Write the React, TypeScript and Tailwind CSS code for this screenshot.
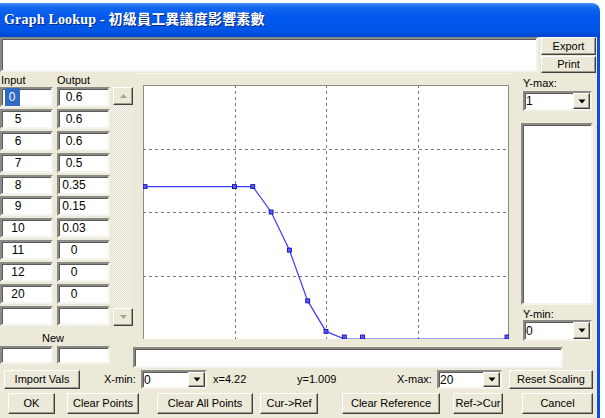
import React from "react";

const rows: [string, string][] = [
  ["0", "0.6"],
  ["5", "0.6"],
  ["6", "0.6"],
  ["7", "0.5"],
  ["8", "0.35"],
  ["9", "0.15"],
  ["10", "0.03"],
  ["11", "0"],
  ["12", "0"],
  ["20", "0"],
  ["", ""],
];

const sunken =
  "bg-white border-2 border-t-[#8a8a86] border-l-[#8a8a86] border-b-[#f4f3ee] border-r-[#f4f3ee] shadow-[inset_1px_1px_0_#5a5a58]";

function Btn({ label, className }: { label: string; className: string }) {
  return (
    <div
      className={
        "flex items-center justify-center bg-[#ece9d8] border border-t-white border-l-white border-r-[#404040] border-b-[#404040] shadow-[inset_-1px_-1px_0_#9d9a8e] text-[11px] text-black leading-none " +
        className
      }
    >
      {label}
    </div>
  );
}

function Select({ value, className }: { value: string; className: string }) {
  return (
    <div className={"flex items-stretch " + sunken + " " + className}>
      <div className="flex-1 flex items-center pl-[1px] text-[12px] leading-none">{value}</div>
      <div className="w-[17px] flex items-center justify-center bg-[#ece9d8] border border-t-white border-l-white border-r-[#404040] border-b-[#404040] shadow-[inset_-1px_-1px_0_#9d9a8e]">
        <svg width="8" height="5" viewBox="0 0 8 5">
          <path d="M0.5 0.5 L7.5 0.5 L4 4.5 Z" fill="#000" />
        </svg>
      </div>
    </div>
  );
}

function Cell({ v, selected, w }: { v: string; selected?: boolean; w: string }) {
  return (
    <div className={"h-[20px] w-[53px] flex items-center " + sunken}>
      <div className={w + " text-center text-[12px] leading-none"}>
        {selected ? (
          <span className="inline-block bg-[#316ac5] text-white w-[15px] py-[3px] -ml-[12px]">{v}</span>
        ) : (
          v
        )}
      </div>
    </div>
  );
}

function Chart() {
  const W = 366;
  const H = 254;
  const pts: [number, number][] = [
    [0, 0.6],
    [5, 0.6],
    [6, 0.6],
    [7, 0.5],
    [8, 0.35],
    [9, 0.15],
    [10, 0.03],
    [11, 0],
    [12, 0],
    [20, 0],
  ];
  const px = (x: number) => (x / 20) * W;
  const py = (y: number) => H - y * H;
  const d = pts.map((p, i) => (i === 0 ? "M" : "L") + px(p[0]).toFixed(1) + " " + py(p[1]).toFixed(1)).join(" ");
  return (
    <svg width={W} height={H} viewBox={`0 0 ${W} ${H}`} className="block">
      <rect x="0" y="0" width={W} height={H} fill="#fff" />
      <line x1="0.5" y1="0" x2="0.5" y2={H} stroke="#8a8a86" />
      <line x1="0" y1="0.5" x2={W} y2="0.5" stroke="#8a8a86" />
      <line x1={W - 0.5} y1="0" x2={W - 0.5} y2={H} stroke="#8a8a86" />
      {[0.25, 0.5, 0.75].map((f) => (
        <line key={"v" + f} x1={Math.round(W * f) + 0.5} y1="0" x2={Math.round(W * f) + 0.5} y2={H} stroke="#7a7a7a" strokeDasharray="3 3" />
      ))}
      {[0.25, 0.5, 0.75].map((f) => (
        <line key={"h" + f} x1="0" y1={Math.round(H * f) + 0.5} x2={W} y2={Math.round(H * f) + 0.5} stroke="#7a7a7a" strokeDasharray="3 3" />
      ))}
      <path d={d} fill="none" stroke="#3a3aff" strokeWidth="1.2" />
      {pts.map((p, i) => (
        <rect
          key={i}
          x={Math.min(Math.max(px(p[0]) - 2, 0), W - 4)}
          y={Math.min(py(p[1]) - 2, H - 4)}
          width="4"
          height="4"
          fill="#5a5aff"
          stroke="#0000b0"
          strokeWidth="0.8"
        />
      ))}
    </svg>
  );
}

export default function App() {
  return (
    <div className="w-[605px] h-[418px] bg-white overflow-hidden font-['Liberation_Sans',Arial,sans-serif] text-black">
      <div className="mt-[3px] w-[600px]">
        {/* Title bar */}
        <div className="h-[34px] rounded-tr-[8px] bg-[linear-gradient(180deg,#4a93f8_0%,#1468ee_12%,#0058ee_40%,#0056e6_80%,#0046d0_100%)] flex items-center pl-[4px]">
          <span className="text-white font-bold text-[14px] leading-none tracking-[0.2px] font-['Liberation_Serif','Noto_Sans_CJK_TC',serif] [text-shadow:1px_1px_0_#0a2a80]">
            Graph Lookup - 初級員工異議度影響素數
          </span>
        </div>
        {/* Body */}
        <div className="bg-[#ece9d8] border-r-[3px] border-r-[#0a4fd8] h-[381px]">
          {/* Top row */}
          <div className="h-[36px] flex">
            <div className={"w-[538px] h-[35px] " + sunken}></div>
            <div className="ml-[3px] flex flex-col">
              <Btn label="Export" className="w-[55px] h-[18px]" />
              <Btn label="Print" className="w-[55px] h-[17px] mt-[1px]" />
            </div>
          </div>
          {/* Middle */}
          <div className="h-[295px] flex">
            {/* Table */}
            <div className="w-[113px] flex flex-col">
              <div className="h-[14px] flex text-[11px] leading-[14px]">
                <span className="w-[57px] pl-[1px]">Input</span>
                <span>Output</span>
              </div>
              <div className="flex flex-col gap-[1.9px]">
                {rows.map((r, i) => (
                  <div key={i} className="flex gap-[4px]">
                    <Cell v={r[0]} selected={i === 0} w="w-[32px]" />
                    <Cell v={r[1]} w="w-[30px]" />
                  </div>
                ))}
              </div>
              <div className="h-[20px] w-[106px] text-center text-[11px] leading-[12px] pt-[6px]">New</div>
              <div className="flex gap-[4px]">
                <div className={"h-[18px] w-[53px] " + sunken}></div>
                <div className={"h-[18px] w-[53px] " + sunken}></div>
              </div>
            </div>
            {/* Scrollbar */}
            <div className="w-[20px] mt-[14px] h-[239px] flex flex-col bg-[repeating-conic-gradient(#f6f5f0_0_25%,#e3e0d2_0_50%)] bg-[length:2px_2px]">
              <div className="h-[18px] flex items-center justify-center bg-[#ece9d8] border border-t-white border-l-white border-r-[#404040] border-b-[#404040] shadow-[inset_-1px_-1px_0_#9d9a8e]">
                <svg width="7" height="4" viewBox="0 0 7 4">
                  <path d="M0 4 L7 4 L3.5 0 Z" fill="#a5a396" />
                </svg>
              </div>
              <div className="flex-1"></div>
              <div className="h-[18px] flex items-center justify-center bg-[#ece9d8] border border-t-white border-l-white border-r-[#404040] border-b-[#404040] shadow-[inset_-1px_-1px_0_#9d9a8e]">
                <svg width="7" height="4" viewBox="0 0 7 4">
                  <path d="M0 0 L7 0 L3.5 4 Z" fill="#a5a396" />
                </svg>
              </div>
            </div>
            {/* Right part */}
            <div className="flex-1 flex flex-col">
              <div className="h-[274px] flex">
                <div className="w-[382px] pl-[10px] pt-[11px] border-t border-t-[#f6f5ef]">
                  <Chart />
                </div>
                <div className="w-[82px] pl-[8px] flex flex-col">
                  <div className="mt-[4px] text-[11px] leading-[12px]">Y-max:</div>
                  <Select value="1" className="mt-[2px] h-[20px] w-[69px]" />
                  <div className={"mt-[12px] ml-[-2px] h-[182px] w-[72px] " + sunken}></div>
                  <div className="mt-[3px] text-[11px] leading-[12px]">Y-min:</div>
                  <Select value="0" className="h-[21px] w-[69px]" />
                </div>
              </div>
              <div className={"h-[21px] w-[430px] " + sunken}></div>
            </div>
          </div>
          {/* Row C */}
          <div className="h-[23px] flex items-center text-[11px]">
            <Btn label="Import Vals" className="ml-[4px] w-[76px] h-[19px]" />
            <span className="ml-[24px] w-[37px]">X-min:</span>
            <Select value="0" className="w-[66px] h-[19px]" />
            <span className="ml-[6px] w-[84px]">x=4.22</span>
            <span className="w-[100px]">y=1.009</span>
            <span className="w-[40px]">X-max:</span>
            <Select value="20" className="w-[65px] h-[19px]" />
            <Btn label="Reset Scaling" className="ml-[7px] w-[84px] h-[19px]" />
          </div>
          {/* Row D */}
          <div className="h-[24px] flex items-center">
            <Btn label="OK" className="ml-[8px] w-[47px] h-[21px]" />
            <Btn label="Clear Points" className="ml-[12px] w-[72px] h-[21px]" />
            <Btn label="Clear All Points" className="ml-[18px] w-[96px] h-[21px]" />
            <Btn label="Cur->Ref" className="ml-[7px] w-[58px] h-[21px]" />
            <Btn label="Clear Reference" className="ml-[24px] w-[98px] h-[21px]" />
            <Btn label="Ref->Cur" className="ml-[13px] w-[50px] h-[21px]" />
            <Btn label="Cancel" className="ml-[19px] w-[71px] h-[21px]" />
          </div>
        </div>
      </div>
    </div>
  );
}
